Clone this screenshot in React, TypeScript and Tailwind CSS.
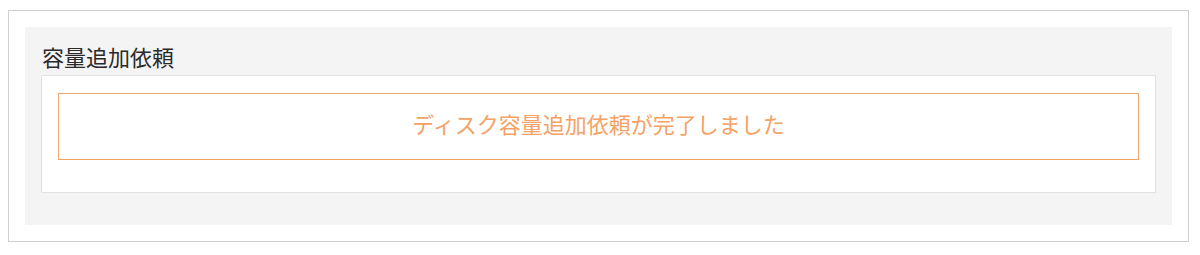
export default function App() {
  return (
    <div
      className="min-h-[255px] bg-white pt-[10px] pl-2"
      style={{ fontFamily: '"Noto Sans CJK JP", "Noto Sans", sans-serif' }}
    >
      <div className="w-[1181px] border border-[#cfcfcf] bg-white p-4">
        <section className="bg-[#f4f4f4] px-4 pt-[15px] pb-8">
          <h2 className="pb-[5px] pl-px text-[22px] leading-[28px] font-normal text-[#2a2a2a]">容量追加依頼</h2>
          <div className="border border-[#e2e2e2] bg-white px-4 pt-[17px] pb-8">
            <p className="border border-[#f3a468] pt-[13px] pb-[19px] text-center text-[22px] leading-[33px] text-[#f4a266]">
              ディスク容量追加依頼が完了しました
            </p>
          </div>
        </section>
      </div>
    </div>
  );
}
